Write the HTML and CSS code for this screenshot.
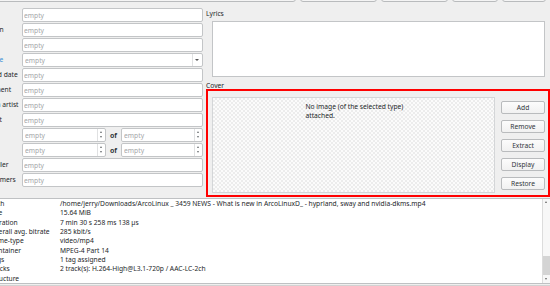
FILE: index.html
```html
<!DOCTYPE html>
<html lang="en">
<head>
  <meta charset="UTF-8" />
  <title>Tag editor</title>
  <link rel="stylesheet" href="styles.css">
</head>
<body>
  <div class="toolbar">
    <div class="tool wide"></div>
    <div class="tool t2"></div>
    <div class="tool t3"></div>
    <div class="tool t4"></div>
    <div class="tool t5"></div>
  </div>

  <div class="editor">
    <div class="fields">
      <label>Title</label><input placeholder="empty">
      <label>Version</label><input placeholder="empty">
      <label>Artist</label><input placeholder="empty">
      <label class="linked">License</label>
      <div class="combo"><input placeholder="empty"><span class="drop"></span></div>
      <label>Record date</label><input placeholder="empty">
      <label>Comment</label><input placeholder="empty">
      <label>Album artist</label><input placeholder="empty">
      <label>Lyricist</label><input placeholder="empty">
      <label>Track</label>
      <div class="pair">
        <div class="spin first"><input placeholder="empty"><span class="arrows"></span></div>
        <b>of</b>
        <div class="spin"><input placeholder="empty"><span class="arrows"></span></div>
      </div>
      <label>Disk</label>
      <div class="pair">
        <div class="spin first"><input placeholder="empty"><span class="arrows"></span></div>
        <b>of</b>
        <div class="spin"><input placeholder="empty"><span class="arrows"></span></div>
      </div>
      <label>Compiler</label><input placeholder="empty">
      <label>Performers</label><input placeholder="empty">
    </div>

    <div class="side">
      <div class="caption">Lyrics</div>
      <div class="lyrics"></div>
      <div class="caption cover-caption">Cover</div>
      <div class="cover">
        <div class="preview">
          <p>No image (of the selected type) attached.</p>
        </div>
        <div class="cover-buttons">
          <button>Add</button>
          <button>Remove</button>
          <button>Extract</button>
          <button>Display</button>
          <button>Restore</button>
        </div>
      </div>
    </div>
  </div>

  <div class="info">
    <div class="props">
      <span>Path</span><span>/home/jerry/Downloads/ArcoLinux _ 3459 NEWS - What is new in ArcoLinuxD_ - hyprland, sway and nvidia-dkms.mp4</span>
      <span>Size</span><span>15.64 MiB</span>
      <span>Duration</span><span>7 min 30 s 258 ms 138 µs</span>
      <span>Overall avg. bitrate</span><span>285 kbit/s</span>
      <span>Mime-type</span><span>video/mp4</span>
      <span>Container</span><span>MPEG-4 Part 14</span>
      <span>Tags</span><span>1 tag assigned</span>
      <span>Tracks</span><span>2 track(s): H.264-High@L3.1-720p / AAC-LC-2ch</span>
      <span>Structure</span><span></span>
    </div>
    <div class="scrollbar">
      <span class="sb-up"></span>
      <div class="sb-track"><span class="sb-handle"></span></div>
      <span class="sb-down"></span>
    </div>
  </div>
  <div class="footer"></div>
</body>
</html>
```

FILE: styles.css
```css
* { box-sizing: border-box; margin: 0; padding: 0; }
body {
  width: 550px;
  height: 286px;
  overflow: hidden;
  background: #efefef;
  font-family: "Noto Sans", "DejaVu Sans", sans-serif;
  font-size: 6.7px;
  color: #31363b;
}

/* top buttons, only their lower edge is in view */
.toolbar {
  display: flex;
  align-items: flex-end;
  gap: 4px;
  height: 2px;
  overflow: hidden;
  padding-right: 4px;
}
.tool {
  flex: none;
  height: 10px;
  border: 1px solid #b9bbbd;
  border-radius: 3px;
  background: #f4f4f4;
}
.tool.wide { flex: 1; margin-left: -10px; }
.t2 { width: 77px; }
.t3 { width: 67px; }
.t4 { width: 46px; }
.t5 { width: 44px; }

.editor {
  display: flex;
  margin-top: 6px;
}

/* tag fields */
.fields {
  display: grid;
  grid-template-columns: 42px 181px;
  grid-auto-rows: 14px;
  row-gap: 1px;
  margin-left: -20px;
}
.fields label {
  line-height: 14px;
  white-space: nowrap;
  color: #232629;
}
.fields label.linked { color: #3a8fd6; }
input {
  font: inherit;
  color: #232629;
  height: 14px;
  min-width: 0;
  border: 1px solid #c3c5c7;
  border-radius: 2px;
  background: #fff;
  padding: 0 1px;
  outline: none;
}
input::placeholder { color: #a4a6a8; }

.combo, .spin {
  display: flex;
  height: 14px;
  border: 1px solid #c3c5c7;
  border-radius: 2px;
  background: #fff;
}
.combo input, .spin input {
  flex: 1;
  width: 0;
  height: 12px;
  border: none;
  padding-left: 2px;
}
.drop {
  position: relative;
  width: 10px;
  border-left: 1px solid #e0e1e2;
}
.drop::after {
  content: "";
  position: absolute;
  left: 2px;
  top: 5px;
  border-left: 2px solid transparent;
  border-right: 2px solid transparent;
  border-top: 2px solid #555;
}
.pair {
  display: flex;
  align-items: center;
  gap: 4px;
}
.pair b { color: #31363b; font-size: 7px; }
.spin.first { width: 84px; flex: none; }
.spin:not(.first) { flex: 1; min-width: 0; }
.arrows {
  position: relative;
  flex: none;
  width: 8px;
  border-left: 1px solid #e0e1e2;
}
.arrows::before, .arrows::after {
  content: "";
  position: absolute;
  left: 2px;
  border-left: 1.5px solid transparent;
  border-right: 1.5px solid transparent;
}
.arrows::before { top: 2px; border-bottom: 2px solid #6a6d70; }
.arrows::after { top: 7px; border-top: 2px solid #6a6d70; }

/* lyrics and cover */
.side {
  width: 344px;
  margin-left: 3px;
}
.caption {
  line-height: 11px;
  color: #232629;
}
.lyrics {
  width: 333px;
  height: 56px;
  margin: 2px 0 0 6px;
  background: #fff;
  border: 1px solid #c3c5c7;
}
.cover-caption {
  line-height: 8px;
  margin-top: 5px;
}
.cover {
  display: flex;
  gap: 6px;
  height: 108px;
  margin-top: -1px;
  border: 2px solid #f00;
  padding: 6px 3px 2px 4px;
}
.preview {
  flex: 1;
  border: 1px solid #d4d6d8;
  background: repeating-conic-gradient(#ececec 0 25%, #fbfbfb 0 50%) 0 0 / 4px 4px;
}
.preview p {
  width: 104px;
  margin: 0 auto;
  padding: 4px 0 0 4px;
  line-height: 9px;
  color: #232629;
}
.cover-buttons {
  display: flex;
  flex-direction: column;
  gap: 6px;
  padding-top: 4px;
}
.cover-buttons button {
  width: 44px;
  height: 13px;
  font: inherit;
  color: #31363b;
  border: 1px solid #b9bbbd;
  border-radius: 2px;
  background: linear-gradient(#fcfcfc, #f1f1f1);
}

/* file info */
.info {
  display: flex;
  height: 86px;
  margin-top: 1px;
  background: #fff;
  border-top: 1px solid #bfc1c3;
  border-bottom: 1px solid #bfc1c3;
}
.props {
  flex: 1;
  display: grid;
  grid-template-columns: 70px 1fr;
  grid-auto-rows: 9.35px;
  line-height: 9.35px;
  margin-left: -10px;
  color: #232629;
  white-space: nowrap;
}
.scrollbar {
  display: flex;
  flex-direction: column;
  width: 8px;
  background: #f7f7f7;
  border-left: 1px solid #dcdcdc;
}
.sb-up, .sb-down {
  position: relative;
  height: 6px;
}
.sb-up::after, .sb-down::after {
  content: "";
  position: absolute;
  left: 2px;
  border-left: 1.5px solid transparent;
  border-right: 1.5px solid transparent;
}
.sb-up::after { top: 2px; border-bottom: 2px solid #666; }
.sb-down::after { top: 1px; border-top: 2px solid #666; }
.sb-track {
  flex: 1;
  display: flex;
  flex-direction: column;
  justify-content: flex-end;
  padding-bottom: 2px;
}
.sb-handle {
  height: 19px;
  background: #d4d4d4;
}
.footer {
  margin-top: 1px;
  border-top: 1px solid #d2d2d2;
}
```
